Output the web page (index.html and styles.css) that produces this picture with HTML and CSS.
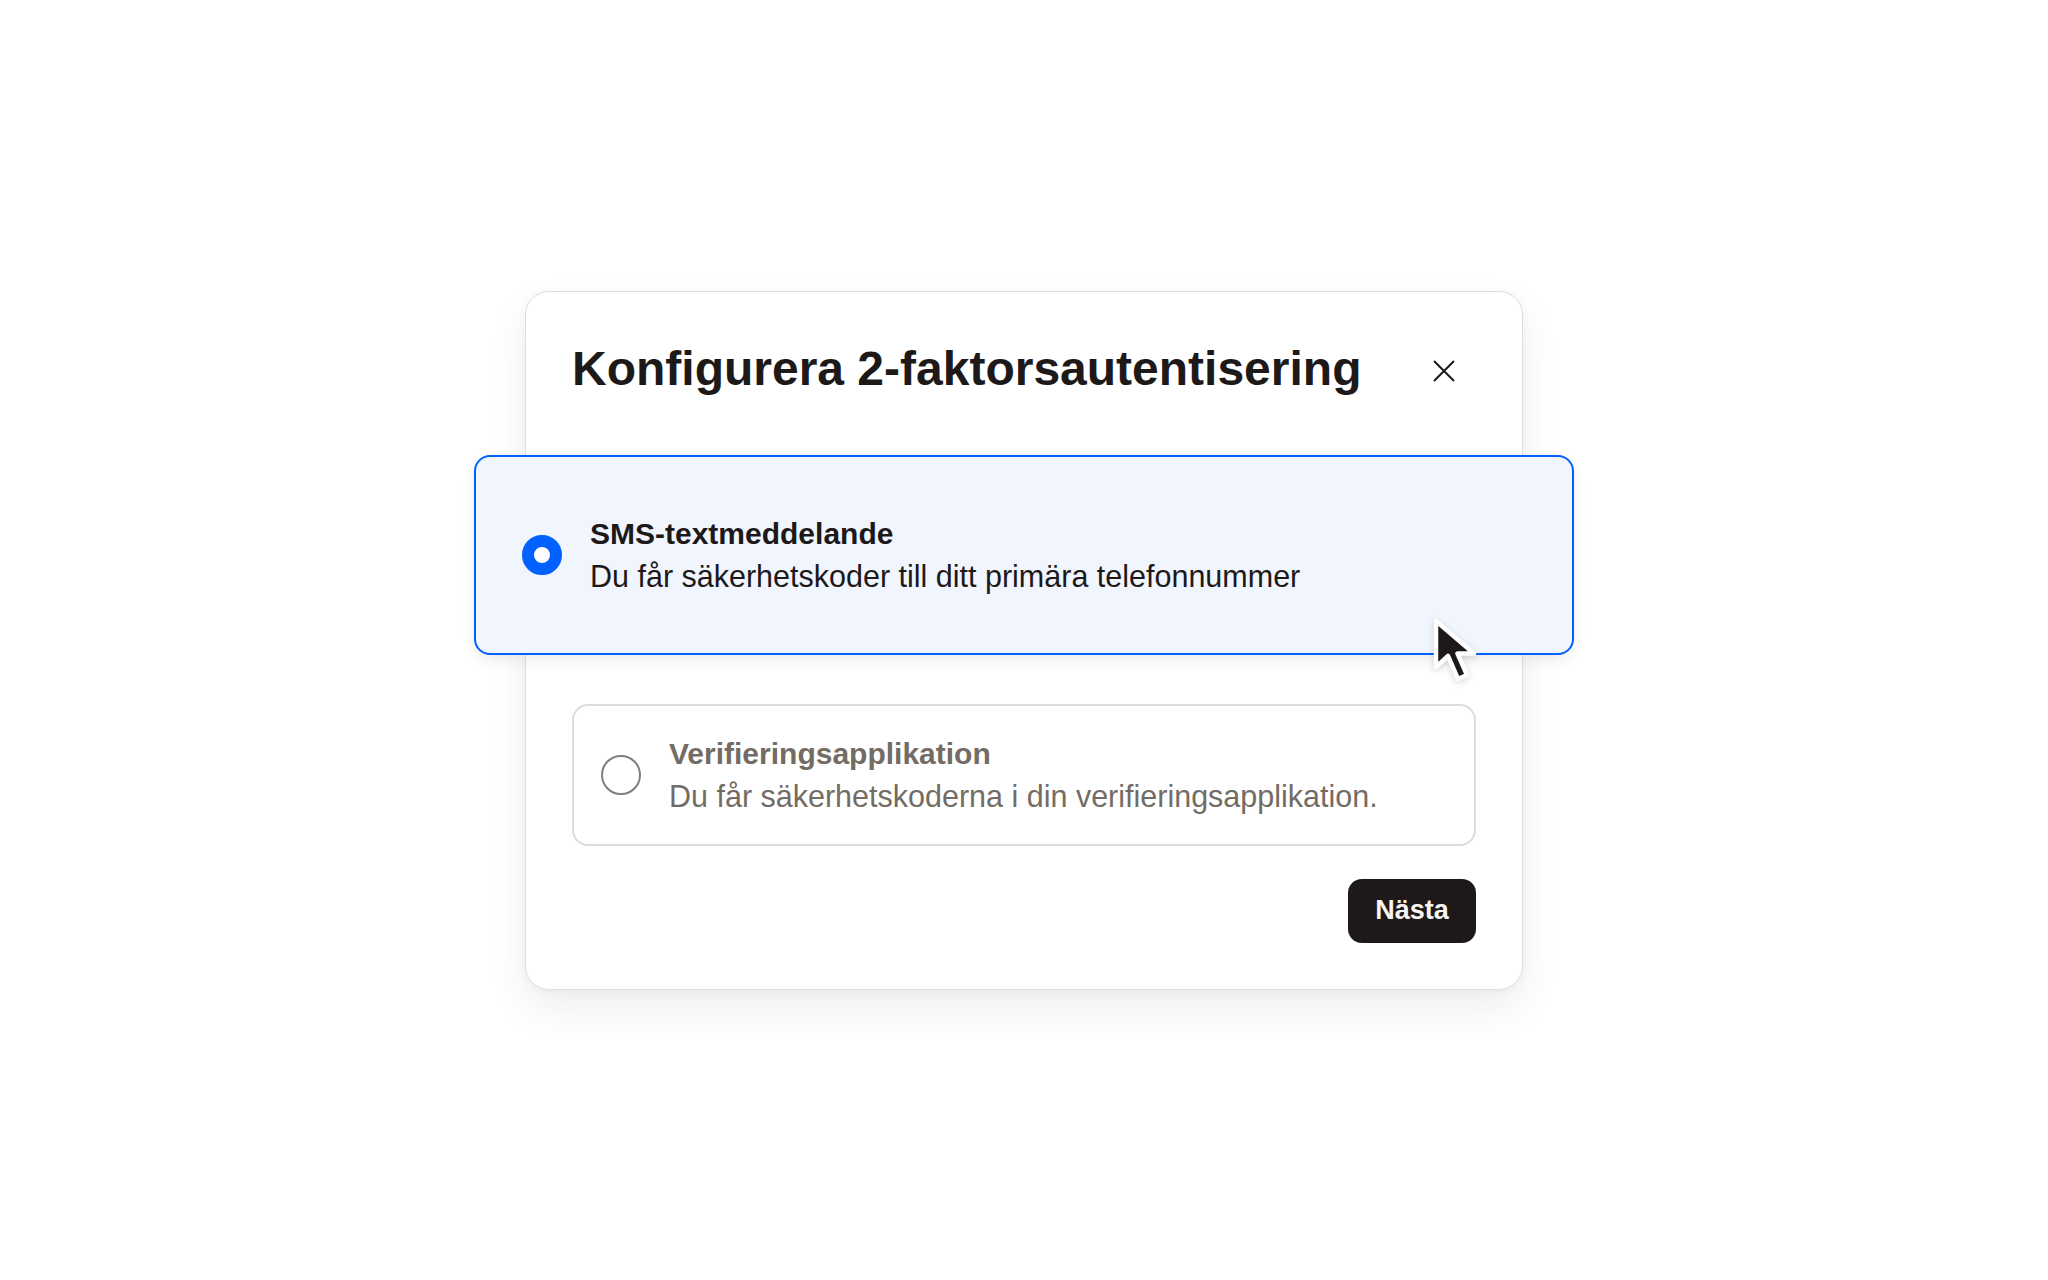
FILE: index.html
```html
<!DOCTYPE html>
<html lang="sv">

<head>
    <meta charset="UTF-8">
    <meta name="viewport" content="width=device-width, initial-scale=1.0">
    <title>Konfigurera 2-faktorsautentisering</title>
    <link rel="stylesheet" href="styles.css">
</head>

<body>
    <!-- 2FA setup dialog -->
    <div class="modal">
        <div class="modal-header">
            <h1 class="modal-title">Konfigurera 2-faktorsautentisering</h1>
            <button class="close-btn" aria-label="Stäng">
                <svg width="24" height="24" viewBox="0 0 24 24">
                    <path d="M2 2 L22 22 M22 2 L2 22" stroke="#1e1919" stroke-width="2" fill="none" />
                </svg>
            </button>
        </div>

        <div class="option option-selected">
            <span class="radio radio-on"></span>
            <div class="option-text">
                <div class="option-title">SMS-textmeddelande</div>
                <div class="option-desc">Du får säkerhetskoder till ditt primära telefonnummer</div>
            </div>
            <!-- mouse pointer hovering the card -->
            <svg class="pointer" width="50" height="68" viewBox="0 0 50 68">
                <path d="M4 4 L4 50 L16 39 L26 62 L35 58 L25.5 36.5 L42 36.5 Z" fill="#1e1919" stroke="#fff"
                    stroke-width="4.5" stroke-linejoin="round" />
            </svg>
        </div>

        <div class="option">
            <span class="radio"></span>
            <div class="option-text muted">
                <div class="option-title">Verifieringsapplikation</div>
                <div class="option-desc">Du får säkerhetskoderna i din verifieringsapplikation.</div>
            </div>
        </div>

        <div class="modal-footer">
            <button class="next-btn">Nästa</button>
        </div>
    </div>
</body>

</html>
```

FILE: styles.css
```css
body {
    font-family: "Liberation Sans", Arial, sans-serif;
    margin: 0;
    padding: 0;
    min-height: 100vh;
    display: flex;
    align-items: center;
    justify-content: center;
    background: #fff;
    color: #1e1919;
}

.modal {
    width: 998px;
    box-sizing: border-box;
    padding: 45px 46px 46px;
    background: #fff;
    border: 1px solid #dedede;
    border-radius: 24px;
    box-shadow: 0 18px 40px rgba(0, 0, 0, 0.07), 0 2px 10px rgba(0, 0, 0, 0.04);
}

.modal-header {
    display: flex;
    align-items: center;
    justify-content: space-between;
    height: 64px;
    margin-bottom: 54px;
}

.modal-title {
    margin: 0;
    font-size: 48px;
    font-weight: 700;
    line-height: 64px;
    letter-spacing: 0;
}

.close-btn {
    width: 64px;
    height: 64px;
    padding: 0;
    border: none;
    background: none;
    display: flex;
    align-items: center;
    justify-content: center;
    margin-top: 4px;
}

.option {
    display: flex;
    align-items: center;
    gap: 28px;
    padding: 26px 27px;
    border: 2px solid #dcdcdc;
    border-radius: 16px;
    background: #fff;
}

.option-selected {
    position: relative;
    margin: 0 -98px 49px;
    padding: 55px 46px 55px;
    border-color: #0061fe;
    background: #f0f5fe;
    box-shadow: 0 6px 14px rgba(0, 0, 0, 0.07);
}

.radio {
    flex: none;
    width: 40px;
    height: 40px;
    box-sizing: border-box;
    border: 2px solid #857d77;
    border-radius: 50%;
}

.radio-on {
    border: 12px solid #0061fe;
    background: #fff;
}

.option-text {
    font-size: 30px;
    line-height: 43px;
}

.option-title {
    font-weight: 700;
}

.option-desc {
    font-size: 30.5px;
}

.muted {
    color: #736c64;
}

.pointer {
    position: absolute;
    left: 956px;
    top: 160px;
    filter: drop-shadow(0 2px 3px rgba(0, 0, 0, 0.15));
}

.modal-footer {
    display: flex;
    justify-content: flex-end;
    margin-top: 33px;
}

.next-btn {
    width: 128px;
    height: 64px;
    border: none;
    border-radius: 14px;
    background: #1e1919;
    color: #f7f5f2;
    font-family: "Liberation Sans", Arial, sans-serif;
    font-size: 27px;
    font-weight: 700;
}
```
